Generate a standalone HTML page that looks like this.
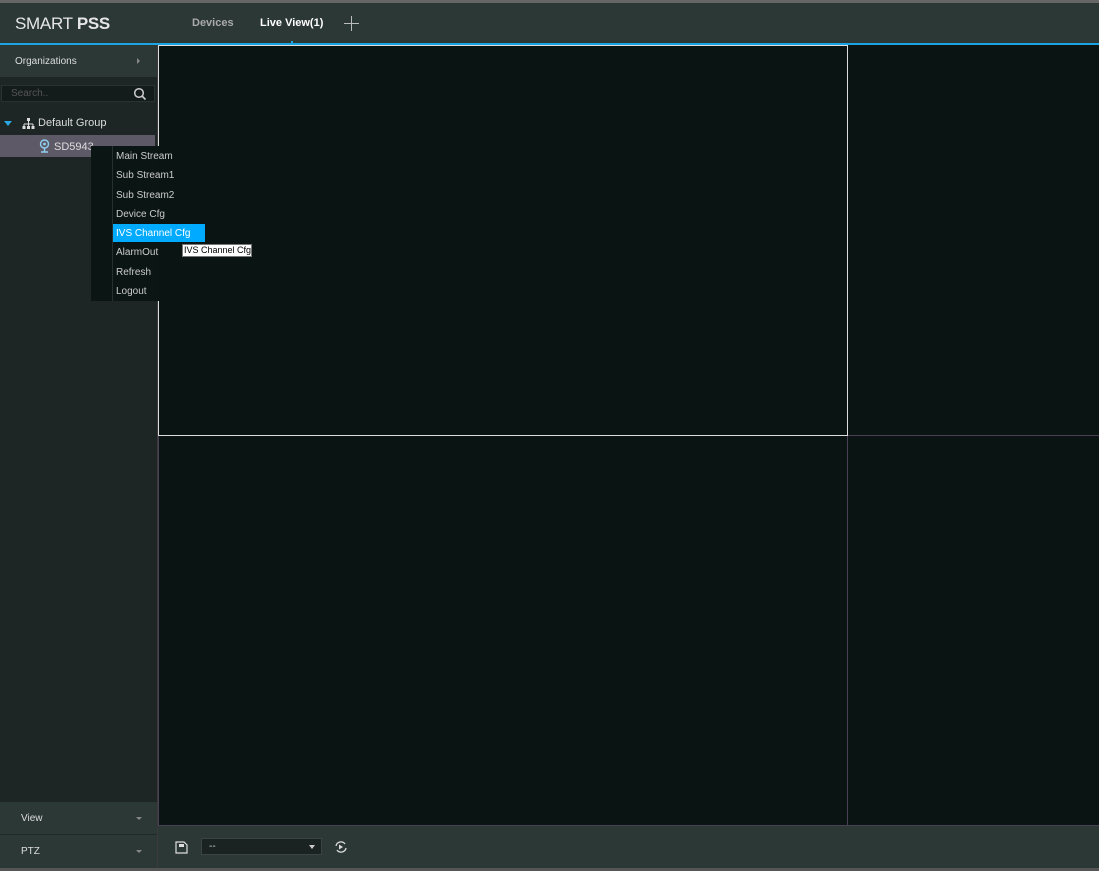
<!DOCTYPE html>
<html><head><meta charset="utf-8"><style>
*{margin:0;padding:0;box-sizing:border-box}
body{width:1099px;height:871px;background:#2b3634;font-family:"Liberation Sans",sans-serif;position:relative;overflow:hidden}
.a{position:absolute}
</style></head><body>
<div class="a" style="left:0;top:0;width:1099px;height:3px;background:#666"></div>
<div class="a" style="left:0;top:3px;width:1099px;height:40px;background:#2c3836"></div>
<div class="a" style="left:15px;top:14px;font-size:17px;color:#e6e6e6;letter-spacing:-0.3px">SMART <b>PSS</b></div>
<div class="a" style="left:192px;top:17px;font-size:11px;font-weight:bold;color:#aaa">Devices</div>
<div class="a" style="left:260px;top:17px;font-size:11px;font-weight:bold;color:#fff">Live View(1)</div>
<div class="a" style="left:344px;top:23px;width:15px;height:1px;background:#bbb"></div>
<div class="a" style="left:351px;top:16px;width:1px;height:15px;background:#bbb"></div>
<div class="a" style="left:0;top:43px;width:1099px;height:2px;background:#1ba3e3"></div>
<div class="a" style="left:291px;top:41px;width:2px;height:2px;background:#1ba3e3"></div>

<!-- sidebar -->
<div class="a" style="left:0;top:45px;width:157px;height:823px;background:#1d2624"></div>
<div class="a" style="left:157px;top:45px;width:1px;height:823px;background:#3a3a3a"></div>
<div class="a" style="left:0;top:45px;width:157px;height:32px;background:#2c3836"></div>
<div class="a" style="left:15px;top:56px;font-size:10px;color:#ddd">Organizations</div>
<div class="a" style="left:137px;top:58px;border-left:3px solid #888;border-top:3px solid transparent;border-bottom:3px solid transparent"></div>
<div class="a" style="left:1px;top:85px;width:154px;height:17px;background:#141c1b;border:1px solid #2a3230"></div>
<div class="a" style="left:11px;top:88px;font-size:10px;color:#555">Search..</div>
<svg class="a" style="left:133px;top:87px" width="14" height="14"><circle cx="6" cy="6" r="4.3" fill="none" stroke="#ccc" stroke-width="1.5"/><line x1="9" y1="9" x2="12.5" y2="12.5" stroke="#ccc" stroke-width="1.6"/></svg>
<div class="a" style="left:4px;top:121px;border-top:5px solid #2aa6e0;border-left:4px solid transparent;border-right:4px solid transparent"></div>
<svg class="a" style="left:22px;top:117px" width="13" height="12"><rect x="5" y="1" width="3" height="3" fill="#ddd"/><path d="M6.5 4v3M2 7h9M2 7v2M11 7v2M6.5 7v2" stroke="#ddd" fill="none"/><rect x="0.5" y="9" width="3" height="3" fill="#ddd"/><rect x="5" y="9" width="3" height="3" fill="#ddd"/><rect x="9.5" y="9" width="3" height="3" fill="#ddd"/></svg>
<div class="a" style="left:38px;top:117px;font-size:11px;color:#ddd">Default Group</div>
<div class="a" style="left:0;top:135px;width:155px;height:22px;background:#5d5967"></div>
<svg class="a" style="left:39px;top:139px" width="11" height="14"><circle cx="5.5" cy="5" r="4" fill="none" stroke="#8fd0f0" stroke-width="1.4"/><circle cx="5.5" cy="5" r="1.4" fill="#8fd0f0"/><path d="M2 13h7M5.5 9v4" stroke="#8fd0f0" stroke-width="1.4"/></svg>
<div class="a" style="left:54px;top:141px;font-size:11px;color:#ddd">SD5943</div>
<div class="a" style="left:0;top:802px;width:157px;height:32px;background:#2c3836"></div>
<div class="a" style="left:0;top:834px;width:157px;height:1px;background:#222a29"></div>
<div class="a" style="left:0;top:835px;width:157px;height:33px;background:#2c3836"></div>
<div class="a" style="left:21px;top:813px;font-size:10px;color:#ddd">View</div>
<div class="a" style="left:21px;top:846px;font-size:10px;color:#ddd">PTZ</div>
<div class="a" style="left:136px;top:817px;border-top:3px solid #888;border-left:3px solid transparent;border-right:3px solid transparent"></div>
<div class="a" style="left:136px;top:850px;border-top:3px solid #888;border-left:3px solid transparent;border-right:3px solid transparent"></div>

<!-- video -->
<div class="a" style="left:158px;top:45px;width:941px;height:781px;background:#0a1513"></div>
<div class="a" style="left:847px;top:436px;width:1px;height:390px;background:#4a4055"></div>
<div class="a" style="left:848px;top:435px;width:251px;height:1px;background:#4a4055"></div>
<div class="a" style="left:158px;top:436px;width:1px;height:390px;background:#4a4055"></div>
<div class="a" style="left:158px;top:825px;width:941px;height:1px;background:#4a4055"></div>
<div class="a" style="left:158px;top:45px;width:690px;height:391px;border:1px solid #ddd"></div>

<!-- bottom bar -->
<div class="a" style="left:158px;top:826px;width:941px;height:42px;background:#2c3836"></div>
<div class="a" style="left:0;top:868px;width:1099px;height:3px;background:#555"></div>
<svg class="a" style="left:175px;top:841px" width="13" height="13"><path d="M1 1h8l3 3v8H1z" fill="none" stroke="#ddd" stroke-width="1.2"/><rect x="4" y="3" width="5" height="3" fill="#ddd"/></svg>
<div class="a" style="left:201px;top:838px;width:121px;height:17px;background:#1a2321;border:1px solid #3a4442"></div>
<div class="a" style="left:209px;top:841px;font-size:10px;color:#ccc">--</div>
<div class="a" style="left:309px;top:845px;border-top:4px solid #ccc;border-left:3px solid transparent;border-right:3px solid transparent"></div>
<svg class="a" style="left:334px;top:840px" width="14" height="14"><path d="M2 6a5 5 0 0 1 9-2M12 8a5 5 0 0 1-9 2" fill="none" stroke="#ddd" stroke-width="1.3"/><path d="M5 4.5l4 2.5-4 2.5z" fill="#ddd"/></svg>

<!-- context menu -->
<div class="a" style="left:91px;top:146px;width:68px;height:155px;background:#0b1513"></div>
<div class="a" style="left:112px;top:146px;width:1px;height:155px;background:#26302e"></div>
<div class="a" style="left:113px;top:224px;width:92px;height:18px;background:#00aaff"></div>
<div class="a" style="left:116px;top:147px;font-size:10px;color:#ccc;line-height:19.3px">Main Stream<br>Sub Stream1<br>Sub Stream2<br>Device Cfg<br><span style="color:#fff">IVS Channel Cfg</span><br>AlarmOut<br>Refresh<br>Logout</div>
<div class="a" style="left:182px;top:244px;width:70px;height:13px;background:#fff;border:1px solid #777;font-size:9px;color:#000;padding-left:1px;line-height:11px;white-space:nowrap">IVS Channel Cfg</div>
</body></html>
